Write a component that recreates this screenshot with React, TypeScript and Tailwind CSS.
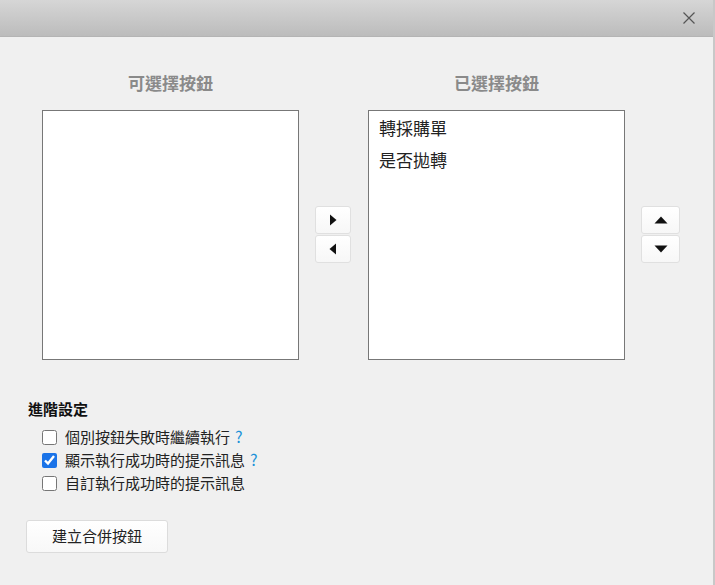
import { useState } from "react";

const font = { fontFamily: '"Noto Sans CJK TC", "Liberation Sans", sans-serif' };

function ArrowButton({ dir }: { dir: "left" | "right" | "up" | "down" }) {
  const paths: Record<string, string> = {
    right: "M4 1.5 L10.5 7 L4 12.5 Z",
    left: "M10 1.5 L3.5 7 L10 12.5 Z",
    up: "M0.5 10.5 L7 3.5 L13.5 10.5 Z",
    down: "M0.5 3.5 L7 10.5 L13.5 3.5 Z",
  };
  return (
    <button
      type="button"
      className="flex h-[28px] w-full items-center justify-center rounded-[3px] border border-[#e0e0e0] bg-gradient-to-b from-white to-[#f7f7f7]"
    >
      <svg width="14" height="14" viewBox="0 0 14 14">
        <path d={paths[dir]} fill="#111" />
      </svg>
    </button>
  );
}

function Option({ checked, label, help }: { checked: boolean; label: string; help?: boolean }) {
  const [on, setOn] = useState(checked);
  return (
    <label className="flex h-[23px] items-center text-[15px] text-[#222]">
      <input
        type="checkbox"
        checked={on}
        onChange={() => setOn(!on)}
        className="mr-[8px] h-[15px] w-[15px] accent-[#1a73e8]"
      />
      <span>{label}</span>
      {help && <span className="ml-[5px] -mt-[4px] text-[16px] text-[#1a90d8]">?</span>}
    </label>
  );
}

export default function App() {
  const selected = ["轉採購單", "是否拋轉"];
  return (
    <div className="h-[585px] w-[715px] overflow-hidden border-r-2 border-[#c8c8c8] bg-[#f0f0f0]" style={font}>
      <div className="flex h-[37px] items-center justify-end border-b border-[#b4b4b4] bg-gradient-to-b from-[#d6d6d6] to-[#bcbcbc] pr-[17px]">
        <svg width="14" height="14" viewBox="0 0 14 14">
          <path d="M1.5 1.5 L12.5 12.5 M12.5 1.5 L1.5 12.5" stroke="#555" strokeWidth="1.2" />
        </svg>
      </div>

      <div className="flex pl-[42px] pt-[34px]">
        <div className="w-[257px]">
          <div className="text-center text-[17px] font-bold leading-[24px] text-[#8a8a8a]">可選擇按鈕</div>
          <div className="mt-[15px] h-[250px] border border-[#777] bg-white" />
        </div>

        <div className="ml-[16px] mr-[17px] flex w-[36px] flex-col gap-[1px] pt-[135px]">
          <ArrowButton dir="right" />
          <ArrowButton dir="left" />
        </div>

        <div className="w-[257px]">
          <div className="text-center text-[17px] font-bold leading-[24px] text-[#8a8a8a]">已選擇按鈕</div>
          <div className="mt-[15px] h-[250px] border border-[#777] bg-white pt-[1px]">
            {selected.map((s) => (
              <div key={s} className="h-[32px] pl-[10px] text-[17px] leading-[32px] text-[#222]">
                {s}
              </div>
            ))}
          </div>
        </div>

        <div className="ml-[16px] flex w-[39px] flex-col gap-[1px] pt-[135px]">
          <ArrowButton dir="up" />
          <ArrowButton dir="down" />
        </div>
      </div>

      <div className="pl-[28px] pt-[37px]">
        <div className="text-[15px] font-bold leading-[24px] text-[#111]">進階設定</div>
        <div className="mt-[5px] ml-[14px] flex flex-col">
          <Option checked={false} label="個別按鈕失敗時繼續執行" help />
          <Option checked={true} label="顯示執行成功時的提示訊息" help />
          <Option checked={false} label="自訂執行成功時的提示訊息" />
        </div>
      </div>

      <div className="pl-[26px] pt-[25px]">
        <button
          type="button"
          className="h-[33px] w-[142px] rounded-[3px] border border-[#dcdcdc] bg-gradient-to-b from-white to-[#f8f8f8] text-[15px] text-[#222]"
        >
          建立合併按鈕
        </button>
      </div>
    </div>
  );
}
